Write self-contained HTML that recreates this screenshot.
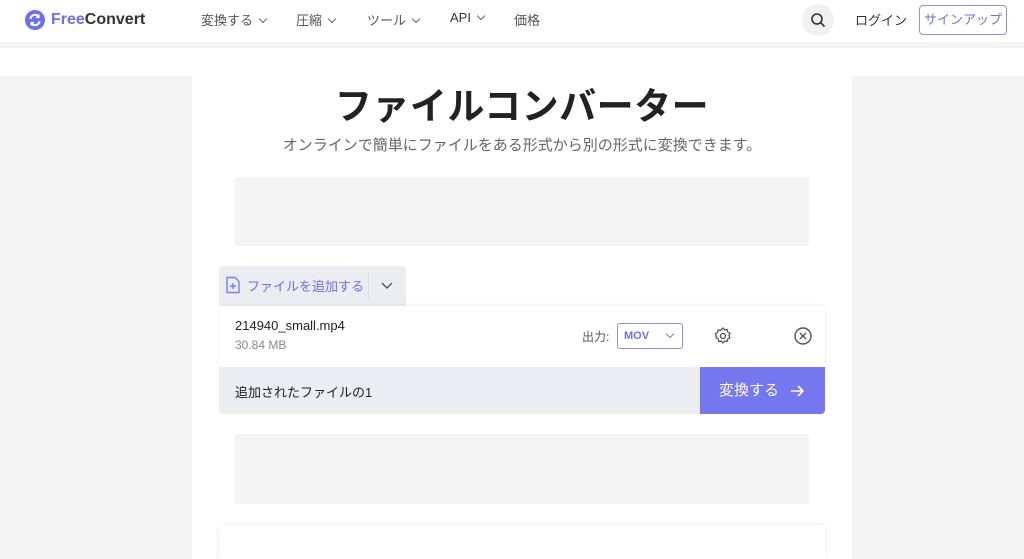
<!DOCTYPE html>
<html><head><meta charset="utf-8"><style>
*{margin:0;padding:0;box-sizing:border-box}
html,body{width:1024px;height:559px;overflow:hidden}
body{background:#f4f4f4;font-family:"Liberation Sans","Noto Sans CJK JP",sans-serif;position:relative;color:#222}
.hdr{position:absolute;left:0;top:0;width:1024px;height:42px;background:#fff}
.strip{position:absolute;left:0;top:48px;width:1024px;height:28px;background:#fff}
.col{position:absolute;left:192px;top:76px;width:660px;height:483px;background:#fff}
.abs{position:absolute}
.nav{top:10px;font-size:13px;color:#555}
.ad{background:#f4f4f4}
.cv{display:inline-block;width:6px;height:6px;border-right:1.3px solid #666;border-bottom:1.3px solid #666;transform:rotate(45deg);margin-left:7px;position:relative;top:-3px}
</style></head><body>
<div class="hdr"></div><div class="strip"></div><div class="col"></div>
<svg class="abs" style="left:25px;top:10px" width="20" height="20" viewBox="0 0 20 20"><circle cx="10" cy="10" r="10" fill="#6c6ef2"/><path d="M5.5 9a4.5 4.5 0 0 1 8-2.5M14.5 11a4.5 4.5 0 0 1-8 2.5" stroke="#fff" stroke-width="2" fill="none"/><path d="M13.8 4.5v2.8h-2.8M6.2 15.5v-2.8h2.8" stroke="#fff" stroke-width="1.6" fill="none"/></svg>
<div class="abs" style="left:51px;top:11px;font-size:16px;font-weight:bold;color:#333"><span style="color:#6c6ef2">Free</span>Convert</div>
<div class="abs nav" style="left:201px">変換する<span class="cv"></span></div>
<div class="abs nav" style="left:296px">圧縮<span class="cv"></span></div>
<div class="abs nav" style="left:367px">ツール<span class="cv"></span></div>
<div class="abs nav" style="left:450px;color:#333">API<span class="cv"></span></div>
<div class="abs nav" style="left:514px">価格</div>
<div class="abs" style="left:802px;top:4px;width:32px;height:32px;border-radius:50%;background:#f1f1f1"></div>
<svg class="abs" style="left:810px;top:12px" width="16" height="16" viewBox="0 0 16 16"><circle cx="7" cy="7" r="5" stroke="#333" stroke-width="1.6" fill="none"/><path d="M11 11l3.5 3.5" stroke="#333" stroke-width="1.6"/></svg>
<div class="abs nav" style="left:855px;color:#333">ログイン</div>
<div class="abs" style="left:919px;top:5px;width:88px;height:30px;border:1px solid #8d8ef3;border-radius:4px;color:#6c6ef2;font-size:13px;text-align:center;line-height:28px">サインアップ</div>
<div class="abs" style="left:192px;width:660px;top:76px;text-align:center;font-size:37px;font-weight:bold;color:#222;letter-spacing:0.5px">ファイルコンバーター</div>
<div class="abs" style="left:192px;width:660px;top:134px;text-align:center;font-size:15px;color:#666">オンラインで簡単にファイルをある形式から別の形式に変換できます。</div>
<div class="abs ad" style="left:235px;top:177px;width:574px;height:69px"></div>
<div class="abs" style="left:219px;top:266px;width:187px;height:40px;background:#ebedf2;border-radius:4px 4px 0 0"></div>
<div class="abs" style="left:368px;top:272px;width:1px;height:28px;background:#dcdde3"></div>
<svg class="abs" style="left:225px;top:276px" width="16" height="18" viewBox="0 0 16 18"><path d="M2 1.5h8l4 4v11H2z" stroke="#7b7cf0" stroke-width="1.4" fill="none"/><path d="M8 7v6M5 10h6" stroke="#7b7cf0" stroke-width="1.4"/></svg>
<div class="abs" style="left:247px;top:276px;font-size:13px;color:#6c6ef2">ファイルを追加する</div>
<svg class="abs" style="left:380px;top:281px" width="14" height="10" viewBox="0 0 14 10"><path d="M2 2l5 5 5-5" stroke="#555" stroke-width="1.4" fill="none"/></svg>
<div class="abs" style="left:219px;top:306px;width:606px;height:61px;background:#fff;box-shadow:0 0 4px rgba(0,0,0,.08)"></div>
<div class="abs" style="left:235px;top:318px;font-size:13px;color:#222">214940_small.mp4</div>
<div class="abs" style="left:235px;top:338px;font-size:12px;color:#888">30.84 MB</div>
<div class="abs" style="left:582px;top:328px;font-size:12px;color:#555">出力:</div>
<div class="abs" style="left:617px;top:323px;width:66px;height:26px;border:1px solid #8d8ef3;border-radius:3px;font-size:11px;font-weight:bold;color:#6c6ef2;padding:6px 0 0 6px">MOV<span style="position:absolute;right:9px;top:7px;width:6px;height:6px;border-right:1.2px solid #888;border-bottom:1.2px solid #888;transform:rotate(45deg)"></span></div>
<svg class="abs" style="left:713px;top:326px" width="20" height="20" viewBox="0 0 24 24"><circle cx="12" cy="12" r="3" stroke="#555" stroke-width="1.6" fill="none"/><path d="M12 2.5l2 2.2 3-.5.6 3 2.7 1.4-1.2 2.8 1.2 2.8-2.7 1.4-.6 3-3-.5-2 2.2-2-2.2-3 .5-.6-3-2.7-1.4L4 12 2.8 9.2 5.5 7.8l.6-3 3 .5z" stroke="#555" stroke-width="1.5" fill="none"/></svg>
<svg class="abs" style="left:794px;top:327px" width="18" height="18" viewBox="0 0 18 18"><circle cx="9" cy="9" r="8" stroke="#555" stroke-width="1.4" fill="none"/><path d="M6 6l6 6M12 6l-6 6" stroke="#555" stroke-width="1.4"/></svg>
<div class="abs" style="left:219px;top:367px;width:481px;height:47px;background:#ebedf2;border-radius:0 0 0 4px"></div>
<div class="abs" style="left:235px;top:382px;font-size:13px;color:#222">追加されたファイルの1</div>
<div class="abs" style="left:700px;top:367px;width:125px;height:47px;background:#7577f1;border-radius:0 0 4px 0;color:#fff;font-size:15px;line-height:47px;padding-left:19px">変換する
<svg style="position:absolute;left:90px;top:17px" width="14" height="14" viewBox="0 0 14 14"><path d="M1 7h12M8 2l5 5-5 5" stroke="#fff" stroke-width="1.6" fill="none"/></svg></div>
<div class="abs ad" style="left:235px;top:434px;width:574px;height:70px"></div>
<div class="abs" style="left:219px;top:525px;width:606px;height:34px;background:#fff;box-shadow:0 0 6px rgba(0,0,0,.08)"></div>
</body></html>
